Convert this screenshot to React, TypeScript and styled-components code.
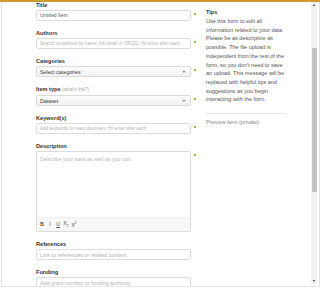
import React from "react";
import styled, { createGlobalStyle } from "styled-components";

const GlobalStyle = createGlobalStyle`
  html, body {
    margin: 0;
    padding: 0;
    background: #ffffff;
  }
  body {
    font-family: "Liberation Sans", Arial, sans-serif;
  }
`;

const Frame = styled.div`
  width: 320px;
  height: 288px;
  display: flex;
  flex-direction: column;
  overflow: hidden;
  background: #fff;
`;

const TopBar = styled.div`
  flex: none;
  height: 2px;
  background: #d09a2e;
`;

const Body = styled.div`
  flex: 1;
  min-height: 0;
  display: flex;
`;

const BottomEdge = styled.div`
  flex: none;
  height: 1px;
  border-top: 1px solid #e6e6e6;
  background: #fff;
`;

const Page = styled.div`
  flex: 1;
  min-width: 0;
  display: flex;
  align-items: flex-start;
  margin-left: 1px;
  border-left: 1px solid #e3e3e3;
  padding-left: 34px;
  overflow: hidden;
`;

const Form = styled.div`
  flex: none;
  width: 170px;
  display: flex;
  flex-direction: column;
`;

const Field = styled.div`
  margin-bottom: 9px;
`;

const Label = styled.div`
  font-size: 5.6px;
  line-height: 6px;
  font-weight: bold;
  color: #333;
  margin-bottom: 2px;
  white-space: nowrap;
`;

const Hint = styled.span`
  font-weight: normal;
  font-size: 4.5px;
  color: #a0a0a0;
  margin-left: 2px;
`;

const Row = styled.div`
  display: flex;
  align-items: flex-start;
`;

const Marker = styled.span<{ $hidden?: boolean }>`
  flex: none;
  width: 2px;
  height: 2px;
  margin: 3px 0 0 3px;
  background: ${(p) => (p.$hidden ? "transparent" : "#8cc63e")};
`;

const TextInput = styled.input<{ $size?: number }>`
  flex: none;
  width: 155px;
  height: 11px;
  box-sizing: border-box;
  margin: 0;
  padding: 0 3px;
  border: 1px solid #dcdcdc;
  border-radius: 2px;
  background: #fff;
  outline: none;
  font-family: "Liberation Sans", Arial, sans-serif;
  font-size: ${(p) => p.$size ?? 5.4}px;
  color: #555;

  &::placeholder {
    color: #b3b3b3;
  }
`;

const SelectBox = styled.div`
  flex: none;
  width: 155px;
  height: 11px;
  box-sizing: border-box;
  padding: 0 5px 0 3px;
  border: 1px solid #dadada;
  border-radius: 2px;
  background: linear-gradient(#fdfdfd, #f1f1f1);
  display: flex;
  align-items: center;
  justify-content: space-between;
  font-size: 5.3px;
  color: #3a3a3a;
  white-space: nowrap;
`;

const Caret = styled.span`
  width: 0;
  height: 0;
  border-left: 1.5px solid transparent;
  border-right: 1.5px solid transparent;
  border-top: 2px solid #555;
`;

const Editor = styled.div`
  flex: none;
  width: 155px;
  height: 81px;
  box-sizing: border-box;
  border: 1px solid #dcdcdc;
  border-radius: 2px;
  display: flex;
  flex-direction: column;
  overflow: hidden;
`;

const EditorArea = styled.div`
  flex: 1;
  padding: 3.5px 3px;
  font-size: 5.4px;
  line-height: 6px;
  color: #b8b8b8;
  white-space: nowrap;
`;

const Toolbar = styled.div`
  flex: none;
  height: 13px;
  display: flex;
  align-items: center;
  padding-left: 1px;
  background: #f7f7f7;
  border-top: 1px solid #f2f2f2;
`;

const ToolButton = styled.span`
  width: 8px;
  text-align: center;
  font-size: 4.8px;
  line-height: 6px;
  color: #444;

  & sub,
  & sup {
    font-size: 3px;
  }
`;

const Tips = styled.aside`
  flex: none;
  width: 80px;
  padding-top: 5.5px;
  color: #555;
  font-size: 5.5px;
  line-height: 8.7px;
`;

const TipsTitle = styled.div`
  font-weight: bold;
  color: #333;
  margin-bottom: 0.8px;
`;

const TipsText = styled.p`
  margin: 0;
`;

const Divider = styled.hr`
  margin: 8.5px 0 4.5px;
  border: none;
  border-top: 1px solid #e6e6e6;
`;

const PreviewLink = styled.div`
  color: #888;
`;

const Scrollbar = styled.div`
  flex: none;
  width: 6px;
  margin-bottom: 2px;
  display: flex;
  flex-direction: column;
  background: #f1f1f1;
`;

const ScrollArrow = styled.div<{ $down?: boolean }>`
  flex: none;
  height: 6px;
  display: flex;
  align-items: center;
  justify-content: center;

  &::after {
    content: "";
    width: 0;
    height: 0;
    border-left: 1.5px solid transparent;
    border-right: 1.5px solid transparent;
    ${(p) =>
      p.$down
        ? "border-top: 2px solid #222;"
        : "border-bottom: 2px solid #222;"}
  }
`;

const ScrollTrack = styled.div`
  flex: 1;
  padding: 0 0.5px;
`;

const ScrollThumb = styled.div`
  margin-top: 40px;
  height: 144px;
  background: #c3c3c3;
`;

const RightEdge = styled.div`
  flex: none;
  width: 2px;
  border-right: 1px solid #e0e0e0;
`;

export default function App() {
  return (
    <>
      <GlobalStyle />
      <Frame>
        <TopBar />
        <Body>
          <Page>
            <Form>
              <Field>
                <Label>Title</Label>
                <Row>
                  <TextInput $size={4.9} defaultValue="Untitled Item" />
                  <Marker />
                </Row>
              </Field>
              <Field>
                <Label>Authors</Label>
                <Row>
                  <TextInput
                    $size={4.6}
                    placeholder="Search co-authors by name, full email or ORCID. Hit enter after each."
                  />
                  <Marker />
                </Row>
              </Field>
              <Field>
                <Label>Categories</Label>
                <Row>
                  <SelectBox>
                    Select categories
                    <Caret />
                  </SelectBox>
                  <Marker />
                </Row>
              </Field>
              <Field>
                <Label>
                  Item type<Hint>(what's this?)</Hint>
                </Label>
                <Row>
                  <SelectBox>
                    Dataset
                    <Caret />
                  </SelectBox>
                  <Marker />
                </Row>
              </Field>
              <Field>
                <Label>Keyword(s)</Label>
                <Row>
                  <TextInput
                    $size={4.5}
                    placeholder="Add keywords for easy discovery. Hit enter after each"
                  />
                  <Marker />
                </Row>
              </Field>
              <Field>
                <Label>Description</Label>
                <Row>
                  <Editor>
                    <EditorArea>Describe your data as well as you can.</EditorArea>
                    <Toolbar>
                      <ToolButton>
                        <b>B</b>
                      </ToolButton>
                      <ToolButton>
                        <i>I</i>
                      </ToolButton>
                      <ToolButton>
                        <u>U</u>
                      </ToolButton>
                      <ToolButton>
                        X<sub>2</sub>
                      </ToolButton>
                      <ToolButton>
                        X<sup>2</sup>
                      </ToolButton>
                    </Toolbar>
                  </Editor>
                  <Marker />
                </Row>
              </Field>
              <Field>
                <Label>References</Label>
                <Row>
                  <TextInput placeholder="Link to references or related content" />
                  <Marker $hidden />
                </Row>
              </Field>
              <Field>
                <Label>Funding</Label>
                <Row>
                  <TextInput placeholder="Add grant number or funding authority" />
                  <Marker $hidden />
                </Row>
              </Field>
            </Form>
            <Tips>
              <TipsTitle>Tips</TipsTitle>
              <TipsText>
                Use this form to edit all information related to your data.
                Please be as descriptive as possible. The file upload is
                independent from the rest of the form, so you don't need to
                save an upload. This message will be replaced with helpful tips
                and suggestions as you begin interacting with the form.
              </TipsText>
              <Divider />
              <PreviewLink>Preview item (private)</PreviewLink>
            </Tips>
          </Page>
          <Scrollbar>
            <ScrollArrow />
            <ScrollTrack>
              <ScrollThumb />
            </ScrollTrack>
            <ScrollArrow $down />
          </Scrollbar>
          <RightEdge />
        </Body>
        <BottomEdge />
      </Frame>
    </>
  );
}
